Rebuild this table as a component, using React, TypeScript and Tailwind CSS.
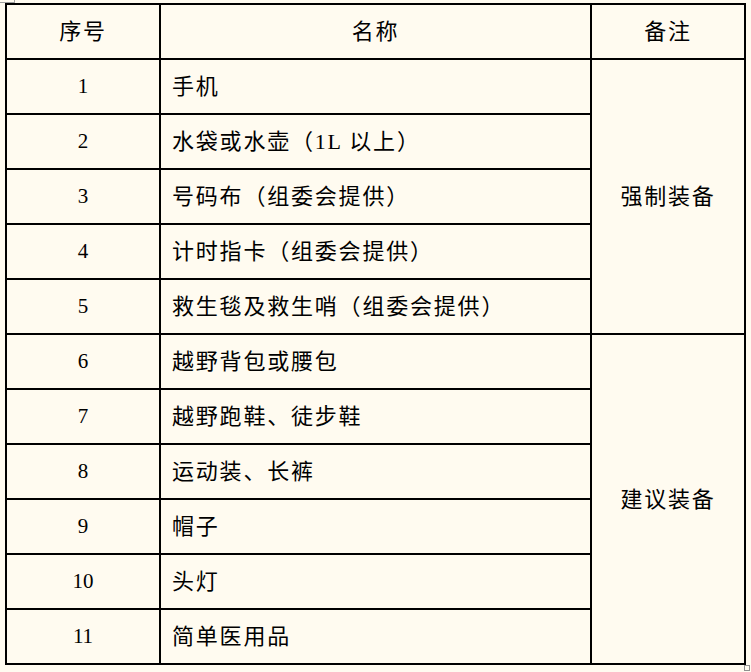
const required = ['手机', '水袋或水壶（1L 以上）', '号码布（组委会提供）', '计时指卡（组委会提供）', '救生毯及救生哨（组委会提供）'];
const suggested = ['越野背包或腰包', '越野跑鞋、徒步鞋', '运动装、长裤', '帽子', '头灯', '简单医用品'];

const cjk = "font-['Liberation_Serif','Noto_Sans_CJK_SC',serif]";

export default function App() {
  const rows = [...required, ...suggested];
  return (
    <div className="relative min-h-screen bg-[#fffbf0] pl-[5px] pt-[3px] text-black">
      <div className="absolute left-0 top-0 h-[3px] w-[15px] border-b border-r border-[#a0a0a0]" />
      <table className={`table-fixed border-collapse ${cjk} text-[22px] tracking-[1.8px]`}>
        <colgroup>
          <col className="w-[154px]" />
          <col className="w-[431px]" />
          <col className="w-[154px]" />
        </colgroup>
        <thead>
          <tr className="h-[55px]">
            <th className="border-2 border-black text-center font-normal">序号</th>
            <th className="border-2 border-black text-center font-normal">名称</th>
            <th className="border-2 border-black text-center font-normal">备注</th>
          </tr>
        </thead>
        <tbody>
          {rows.map((name, i) => (
            <tr key={i} className="h-[55px]">
              <td className="border-2 border-black text-center text-[21px] tracking-normal">{i + 1}</td>
              <td className="border-2 border-black pl-[11px] text-left">{name}</td>
              {i === 0 && (
                <td rowSpan={5} className="border-2 border-black text-center">强制装备</td>
              )}
              {i === 5 && (
                <td rowSpan={6} className="border-2 border-black text-center">建议装备</td>
              )}
            </tr>
          ))}
        </tbody>
      </table>
      <div className="absolute left-[744px] top-[665px] h-[6px] w-[6px] border border-[#909090]" />
    </div>
  );
}
